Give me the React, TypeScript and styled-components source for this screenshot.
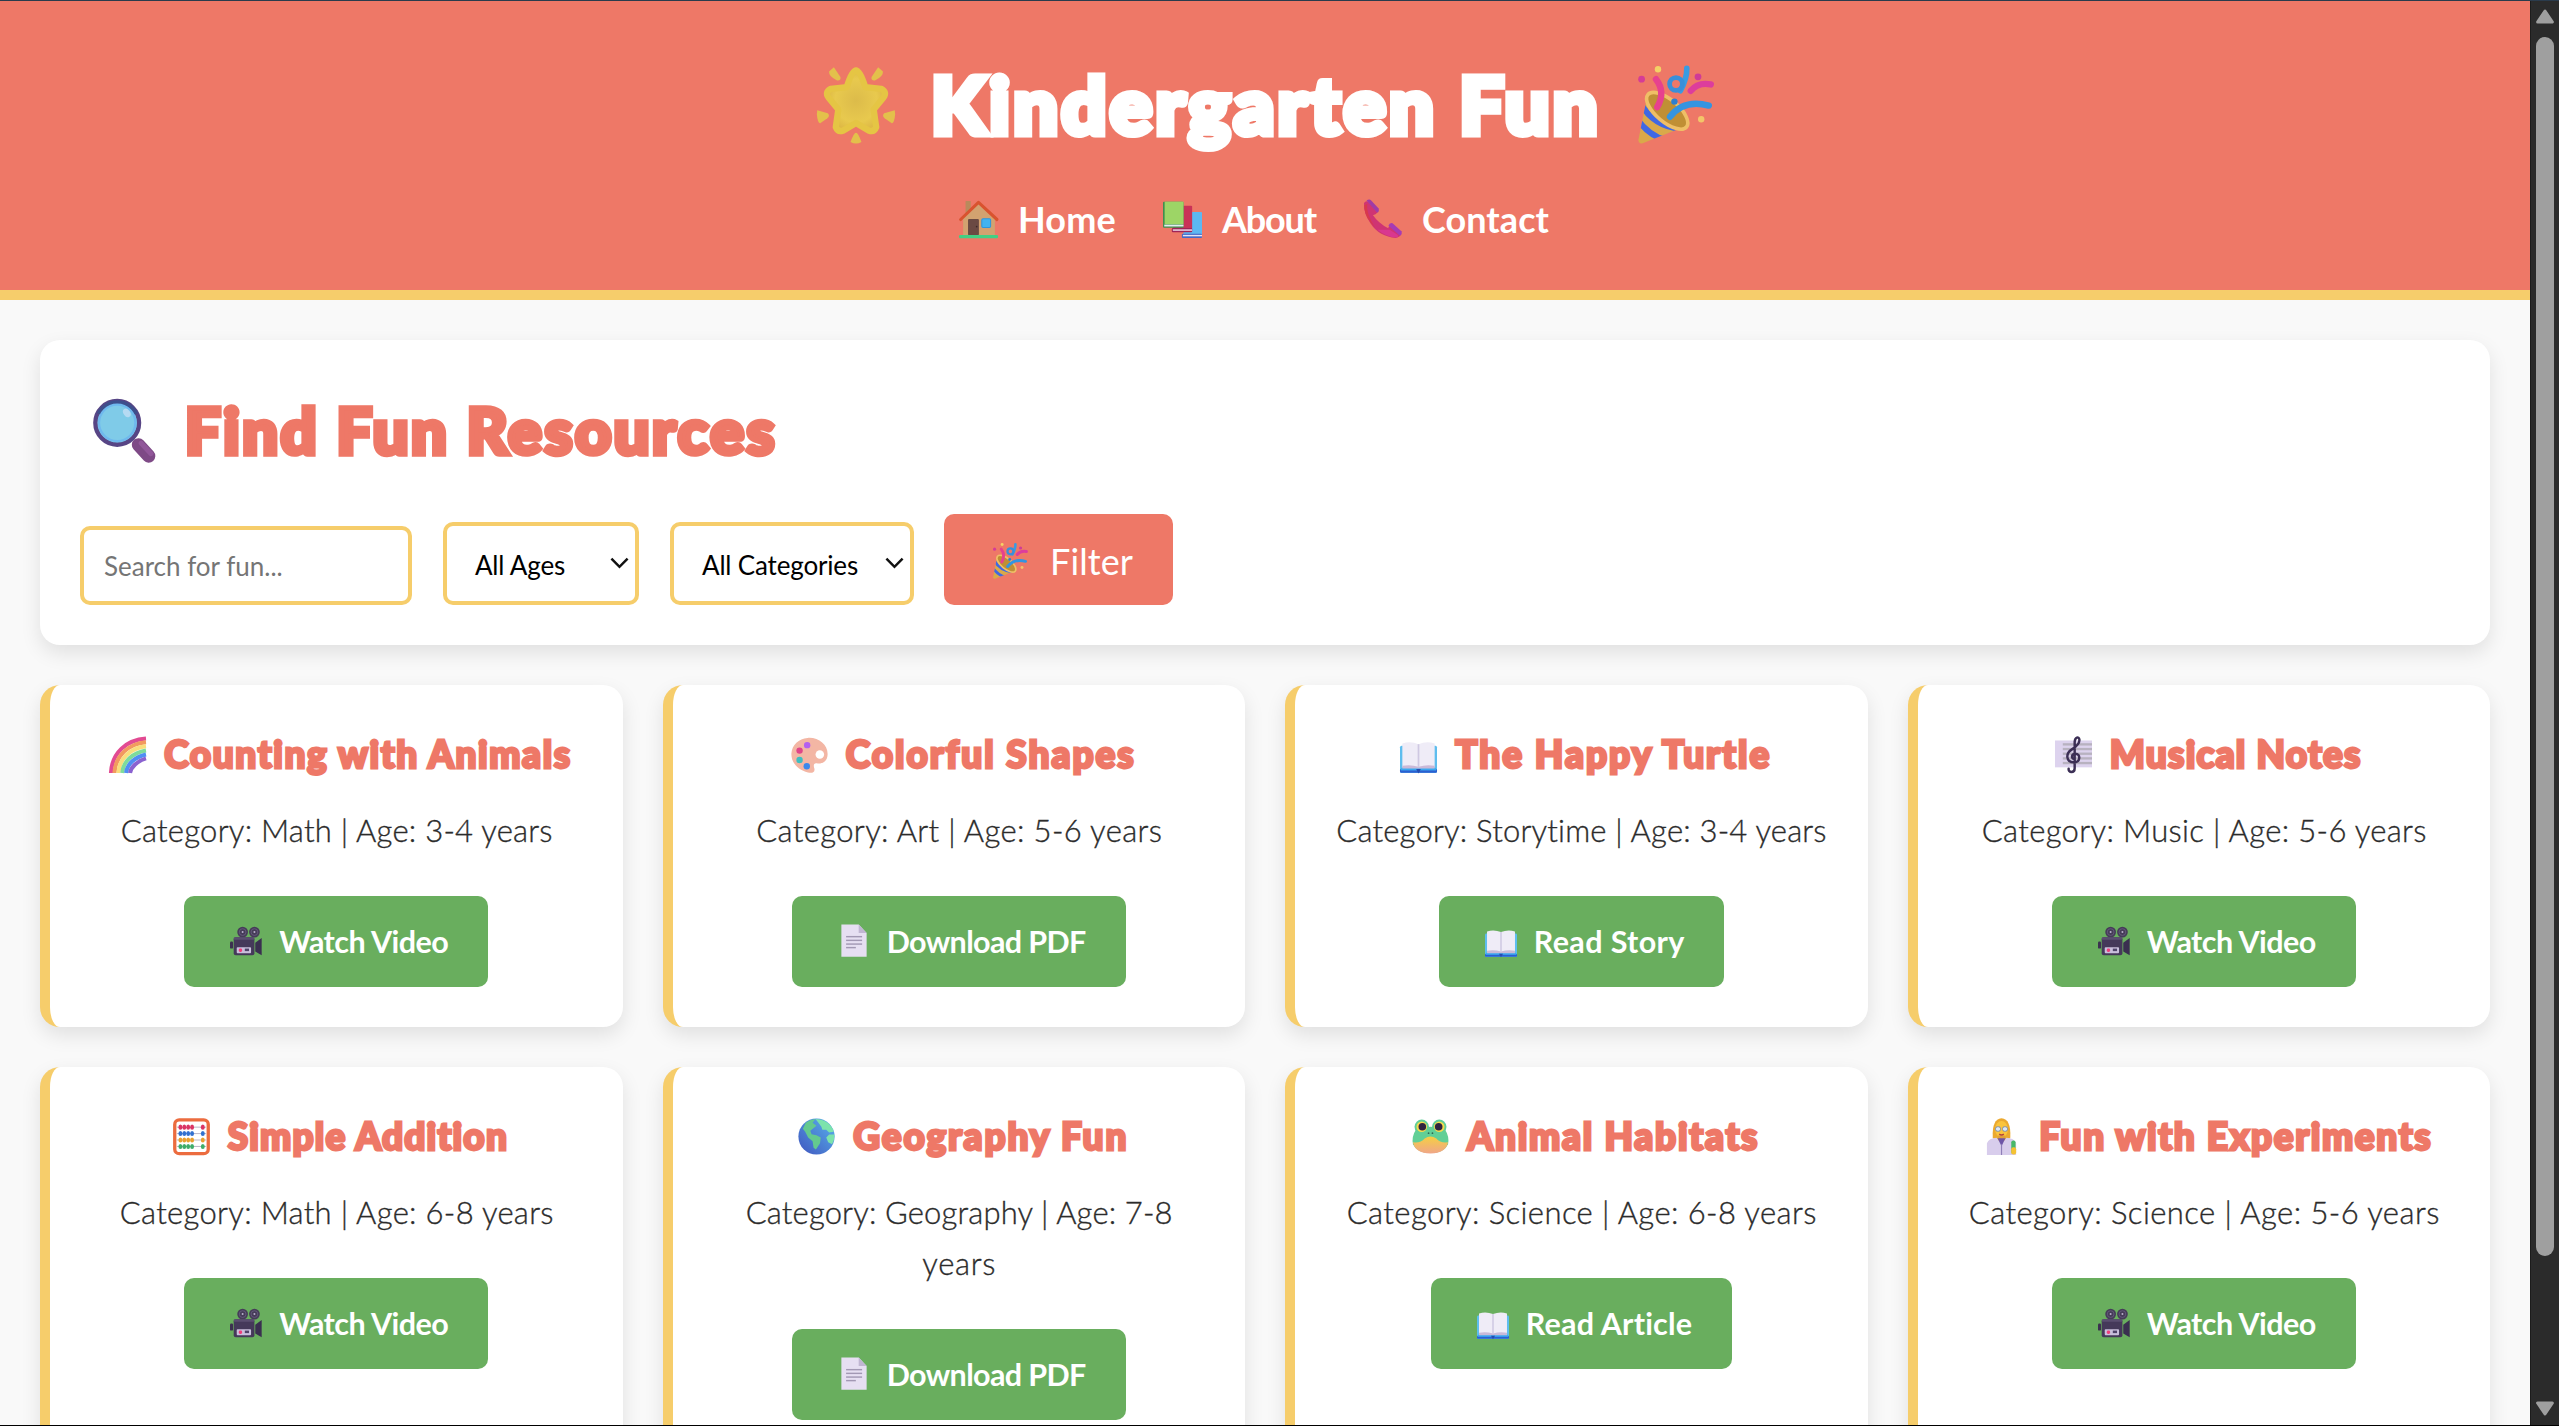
import React, { useLayoutEffect, useRef, useState } from "react";
import styled, { createGlobalStyle } from "styled-components";

const coral = "#ee7867";
const sun = "#f6cd6b";
const leaf = "#69ae5e";

const GlobalStyle = createGlobalStyle`
  *, *::before, *::after { box-sizing: border-box; }
  html, body { margin: 0; height: 100%; overflow: hidden; }
  body {
    background: #f9f9f9;
    color: #333;
    font-family: Lato, "Open Sans", sans-serif;
  }
`;

/* ---------- text set to a measured width ---------- */

const Line = styled.span<{ $w: number }>`
  display: block;
  flex: none;
  width: ${(p) => p.$w}px;
  white-space: nowrap;
`;

function Fit({ w, children }: { w: number; children: string }) {
  const ref = useRef<HTMLSpanElement>(null);
  const [spacing, setSpacing] = useState(0);
  useLayoutEffect(() => {
    const el = ref.current;
    if (el) setSpacing((w - el.getBoundingClientRect().width) / children.length);
  }, []);
  return (
    <Line $w={w}>
      <span ref={ref} style={{ letterSpacing: spacing }}>
        {children}
      </span>
    </Line>
  );
}

/* ---------- emoji drawings ---------- */

const Glyph = styled.svg<{ $s: number; $dy?: number }>`
  display: block;
  flex: none;
  width: ${(p) => p.$s}px;
  height: ${(p) => p.$s}px;
  margin-top: ${(p) => (p.$dy ?? 0) * 2}px;
  overflow: visible;
`;

const art: Record<string, React.ReactNode> = {
  star: (
    <>
      <defs>
        <radialGradient id="starFill" cx=".5" cy=".5" r=".6">
          <stop offset="0" stopColor="#dcbb4a" />
          <stop offset=".6" stopColor="#e8c94e" />
          <stop offset="1" stopColor="#d8ae3f" />
        </radialGradient>
      </defs>
      <path
        d="M19 3 Q21 3 23.4 11 L31 11.8 Q34 13.4 32 16 L27.4 21.6 L28.6 30 Q27.6 32.6 25 31.6 L19 28 L13 31.6 Q10.4 32.6 9.4 30 L10.6 21.6 L6 16 Q4 13.4 7 11.8 L14.6 11 Q17 3 19 3 Z"
        fill="url(#starFill)" stroke="#e5c544" strokeWidth="3" strokeLinejoin="round"
      />
      <g fill="#e3c04b">
        <path d="M8.5 1.6 L11.6 6.2 Q12 8 10 7.8 Q6 6 6.2 3.6Z" />
        <path d="M29.5 1.6 L26.4 6.2 Q26 8 28 7.8 Q32 6 31.8 3.6Z" />
        <path d="M.6 22 L5.6 23.4 Q6.8 24.6 5.4 25.8 L2 28.2 Q.8 28.2 .4 24Z" />
        <path d="M37.4 22 L32.4 23.4 Q31.2 24.6 32.6 25.8 L36 28.2 Q37.2 28.2 37.6 24Z" />
        <path d="M19 32.6 Q20 32.6 21.6 37 Q19 38.6 16.4 37 Q18 32.6 19 32.6Z" />
      </g>
    </>
  ),
  party: (
    <>
      <defs>
        <clipPath id="coneClip">
          <path d="M5.6 14 L1.2 36 Q1.4 38.4 4 37.4 L25 29Z" />
        </clipPath>
      </defs>
      <path d="M5.6 14 L1.2 36 Q1.4 38.4 4 37.4 L25 29Z" fill="#d9a94a" />
      <g clipPath="url(#coneClip)" stroke="#3f68e4" strokeWidth="3" fill="none">
        <path d="M2 17 Q8 29 23 30.6" />
        <path d="M0 25 Q7 34.4 15 36" />
      </g>
      <ellipse cx="15.6" cy="21.4" rx="12.6" ry="5.6" transform="rotate(40 15.6 21.4)" fill="#c08f35" stroke="#efbf66" strokeWidth="1.8" />
      <g fill="none" strokeLinecap="round" strokeWidth="3.2">
        <path d="M10.6 19.6 Q15 12 10 5.6" stroke="#e7418e" />
        <path d="M17 24.4 Q24 15.4 36.4 18.8" stroke="#3494e0" />
        <path d="M27.4 11.4 Q31 7 37.4 8.2" stroke="#dd3d9c" />
        <path d="M25.4 .2 Q25.6 5 22.2 11.4" stroke="#3a9be2" strokeWidth="2.8" />
        <circle cx="20" cy="8" r="3.2" stroke="#3a8fd9" strokeWidth="2.4" />
      </g>
      <circle cx="2.8" cy="5.6" r="1.7" fill="#d53c97" />
      <circle cx="31" cy="4.4" r="1.7" fill="#cf3b97" />
      <circle cx="19.2" cy="16.8" r="1.6" fill="#2e7fcf" />
      <circle cx="11" cy=".6" r="1.6" fill="#f3d266" />
      <circle cx="32.6" cy="25.6" r="1.6" fill="#f3c569" />
    </>
  ),
  house: (
    <>
      <rect x="6.4" y="1" width="5" height="13" fill="#b98a5c" />
      <path d="M4 18 L19 3 L35 18 V36 H4Z" fill="#d2a270" />
      <path d="M1.6 19 L19 2.4 L37 19" fill="none" stroke="#d9532f" strokeWidth="3" strokeLinejoin="round" strokeLinecap="round" />
      <rect x="8.8" y="18.4" width="10.6" height="16" rx="1" fill="#6b4a43" />
      <circle cx="17.2" cy="26" r=".8" fill="#3c2a28" />
      <rect x="22.2" y="18.2" width="8.6" height="8.6" rx="1.2" fill="#42b3f0" stroke="#2f95dc" strokeWidth="1" />
      <rect x="0" y="34.2" width="38" height="3" rx="1" fill="#44cf83" />
    </>
  ),
  books: (
    <>
      <rect x="20" y="11.6" width="18" height="25" rx="1" fill="#5cb8f2" />
      <rect x="18.4" y="32.8" width="19.6" height="4.2" rx="1" fill="#4468c6" />
      <rect x="19.4" y="34" width="18.6" height="1.4" fill="#e5e4f4" />
      <rect x="10" y="5.6" width="18.4" height="25.6" rx="1" fill="#c93257" />
      <rect x="8.6" y="27.4" width="19.8" height="4" rx="1" fill="#a02458" />
      <rect x="9.6" y="28.6" width="18.8" height="1.4" fill="#eed9ea" />
      <rect x="0" y="1.6" width="20" height="25.4" rx="1" fill="#3f8f4e" />
      <rect x="1.6" y="1.6" width="18.4" height="22" fill="#9dd566" />
      <rect x="1.2" y="24" width="18.8" height="1.8" fill="#e4ecef" />
    </>
  ),
  phone: (
    <>
      <path d="M1 3 Q2.4 .6 5 1.6 L14 12 Q12.6 15 9.6 14.6 Q15 22.6 24.6 27.6 Q25 24.6 28.4 24 L37 33 Q36.4 36.4 32 37 Q16 36 7.4 23 Q.4 13 1 3Z" fill="#cf3473" />
      <path d="M1.2 5 Q.6 13 7.4 22 L12 27 Q3 14 4 4Z" fill="#d8394c" />
      <path d="M3.4 .6 Q6 -1.4 8 .4 L15 8 Q16.4 11 13.8 12.4Z" fill="#a03ba6" />
      <path d="M24.8 25 Q26 21.6 28.8 22.6 L37.4 30.4 Q38.6 33.4 36 34.8Z" fill="#a53bb4" />
      <path d="M14 29 Q24 37 34 36.4 L34 34 L26 29Z" fill="#e03aa1" opacity=".6" />
    </>
  ),
  magnifier: (
    <>
      <path d="M27.4 27.6 L33.6 34.4" stroke="#7e4a86" strokeWidth="8" strokeLinecap="round" />
      <path d="M29 26.6 L35 33" stroke="#91579a" strokeWidth="3" strokeLinecap="round" />
      <circle cx="14.6" cy="14.4" r="13.2" fill="#7fcbe8" stroke="#574585" strokeWidth="2.6" />
      <path d="M3.4 9 A12.6 12.6 0 0 1 26 9" fill="none" stroke="#3d4f8c" strokeWidth="2.4" />
      <circle cx="14.6" cy="14.4" r="11" fill="none" stroke="#6fb9ee" strokeWidth="1.4" />
      <ellipse cx="20.4" cy="8.4" rx="2" ry="2.8" transform="rotate(-35 20.4 8.4)" fill="#b5daf2" />
    </>
  ),
  rainbow: (
    <g fill="none" strokeWidth="4.2">
      <path d="M2 38 C3 17 18 4 38 2.6" stroke="#e24a92" />
      <path d="M5.6 38 C6.6 20 20 8 38 6.4" stroke="#f29a5f" />
      <path d="M9.6 38 C10.4 23.4 21.6 12.4 38 10.6" stroke="#f9de7d" />
      <path d="M13.6 38 C14.4 26 24.4 17 38 14.8" stroke="#7edc9b" />
      <path d="M17.6 38 C18.4 29 26.6 21.4 38 19" stroke="#4f8ff2" />
      <path d="M21.6 38 C22.4 32 29 25.6 38 23" stroke="#8a62d0" />
    </g>
  ),
  palette: (
    <>
      <path d="M17 2 C28 1 38 9 37.6 19 C37.4 26 32 29.2 26.4 28 C23 27.6 23 30.4 24 33.4 C25 38 21 38.4 17.4 37.4 C7 35 0 27 .4 18 C1 9 8 2.6 17 2Z" fill="#f3b6a4" />
      <circle cx="29.6" cy="19" r="4.4" fill="#fff" />
      <circle cx="16.6" cy="9.4" r="3.3" fill="#b45ff0" />
      <circle cx="8.8" cy="15" r="3.3" fill="#e0458a" />
      <circle cx="8.8" cy="24.6" r="3.3" fill="#3ebec0" />
      <circle cx="16.2" cy="31" r="3.3" fill="#3b88ec" />
    </>
  ),
  book: (
    <>
      <rect x="0" y="10" width="38" height="28" rx="1.6" fill="#5ebdee" />
      <rect x="0" y="34" width="38" height="3.8" rx="1.4" fill="#2c5fd0" />
      <rect x="1" y="33" width="36" height="2.4" fill="#3aa8f0" />
      <path d="M2.4 7.6 Q11 5 19 8.4 Q27 5 35.6 7.6 V32 H2.4Z" fill="#efecf7" />
      <path d="M2.4 30.6 Q11 29 19 31.6 Q27 29 35.6 30.6 V33.4 H2.4Z" fill="#c9b9d8" />
      <path d="M19 8.4 V32" stroke="#cfc8e2" strokeWidth="1.8" />
      <path d="M16.6 34 H21.4 L19 38.4Z" fill="#254cb0" />
    </>
  ),
  music: (
    <>
      <rect x="0" y="4.6" width="38" height="27.6" fill="#ddd3ee" />
      <g fill="#b8b2c0">
        {[7.4, 12.2, 17, 21.8, 26.6].map((y) => (
          <rect key={y} x="8" y={y} width="30" height="2.4" />
        ))}
      </g>
      <path d="M19 27 C11.4 27 10.6 18 17 14 C22.6 10.4 25.6 7 25 3.4 C24.4 .4 20.6 1 20.2 6 L20.2 33 C20.2 38.6 13.4 38 14 33.6 M19 27 C26.6 27 26.4 18.2 21 18.2 C16.6 18.2 16.6 23.4 19.6 23.6" fill="none" stroke="#3c2f55" strokeWidth="2.5" strokeLinecap="round" />
    </>
  ),
  abacus: (
    <>
      <rect x="1.8" y="2" width="34.4" height="34.6" rx="4.6" fill="#fff" stroke="#ec6c3f" strokeWidth="3.4" />
      {["#db3464", "#3271cf", "#eaa02f", "#3fad69"].map((c, i) => (
        <g key={c}>
          <path d={`M4 ${9.4 + i * 6.6} H34`} stroke="#b9b4c4" strokeWidth="1" />
          {[7, 11, 15, 19, 30].map((x) => (
            <ellipse key={x} cx={x + 0.6} cy={9.4 + i * 6.6} rx="2" ry="2.6" fill={c} />
          ))}
        </g>
      ))}
    </>
  ),
  globe: (
    <>
      <defs>
        <linearGradient id="sea" x1="1" y1="0" x2="0" y2="1">
          <stop offset="0" stopColor="#58b3ec" />
          <stop offset="1" stopColor="#4055bf" />
        </linearGradient>
      </defs>
      <circle cx="19" cy="19" r="18.6" fill="url(#sea)" />
      <path d="M8 5 Q12 1.6 18 1 L15 5 L19 8 L12.6 13 L14 16.6 L19 17.6 L23.4 20 L22.6 26 L18.4 32.4 L16 30.6 L15 24 L10.4 20 L7.4 14 L5 11Z" fill="#64c98f" />
      <path d="M18 1 Q28 1 33.6 8 Q36 11 36.6 14 L32 15 L29 12 L25 12 L24 9 L21 5Z M37.4 17 Q37.6 23 35 27 L31 25 L29 20 L32 17Z" fill="#7ce3ac" />
    </>
  ),
  frog: (
    <>
      <defs>
        <linearGradient id="frogChin" x1="0" y1="0" x2="0" y2="1">
          <stop offset="0" stopColor="#f5cf42" />
          <stop offset="1" stopColor="#f0a688" />
        </linearGradient>
      </defs>
      <circle cx="10" cy="9" r="7.4" fill="#5fcf99" />
      <circle cx="28" cy="9" r="7.4" fill="#5fcf99" />
      <path d="M4 12 Q19 6 34 12 Q38.6 19 37 27 Q33 36 19 36 Q5 36 1 27 Q-.6 19 4 12Z" fill="#62cf96" />
      <path d="M1 25 Q9 26 13 21 Q19 17 25 21 Q29 26 37 25 Q35 36.4 19 36.4 Q3 36.4 1 25Z" fill="url(#frogChin)" />
      <circle cx="10" cy="9" r="5.4" fill="#f5dc4e" />
      <circle cx="28" cy="9" r="5.4" fill="#f5dc4e" />
      <circle cx="10.6" cy="9" r="3.9" fill="#2f2440" />
      <circle cx="27.4" cy="9" r="3.9" fill="#2f2440" />
      <circle cx="17" cy="15.6" r=".9" fill="#2e6a52" />
      <circle cx="21" cy="15.6" r=".9" fill="#2e6a52" />
    </>
  ),
  scientist: (
    <>
      <path d="M9 20 Q8 1 18 .2 Q28 1 27 20 L24 24 H12Z" fill="#eba92f" />
      <ellipse cx="18" cy="11.6" rx="6.6" ry="8.4" fill="#fac43d" />
      <path d="M14.6 18 H21.6 V24 H14.6Z" fill="#e0a03a" />
      <path d="M3 38 V26 Q5 20.6 13 20.4 L18 27 L23 20.4 Q31 20.6 33 26 V38Z" fill="#d8cdec" />
      <path d="M14 20.8 L18 29 L22 20.8Z" fill="#6e55a8" />
      <path d="M18 27 V38" stroke="#8f80b8" strokeWidth="1.2" />
      <g fill="#dbe7f7" stroke="#7d8ba5" strokeWidth="1">
        <rect x="11.8" y="9" width="5.2" height="4.6" rx="2" />
        <rect x="19" y="9" width="5.2" height="4.6" rx="2" />
      </g>
      <path d="M15.6 16.6 Q18 18.4 20.4 16.6" stroke="#b5413d" strokeWidth="1.4" fill="none" />
      <rect x="28" y="23" width="4.4" height="14" rx="2" fill="#48b968" />
      <rect x="28" y="30" width="5" height="7.4" rx="2" fill="#f5c233" />
    </>
  ),
  camera: (
    <>
      <circle cx="15" cy="8.4" r="6.4" fill="#463c58" />
      <circle cx="29" cy="8.4" r="6.4" fill="#463c58" />
      <circle cx="15" cy="8.4" r="4" fill="none" stroke="#675c80" strokeWidth="1" />
      <circle cx="29" cy="8.4" r="4" fill="none" stroke="#675c80" strokeWidth="1" />
      <circle cx="15" cy="8.4" r="1.2" fill="#b9b0cc" />
      <circle cx="29" cy="8.4" r="1.2" fill="#b9b0cc" />
      <rect x="4.4" y="14.4" width="24.6" height="21.6" rx="2.4" fill="#45395a" />
      <rect x="4.4" y="14.4" width="24.6" height="3" rx="1.4" fill="#5a4e70" />
      <rect x="0" y="19.6" width="3.6" height="8.4" rx="1.4" fill="#3c3150" />
      <path d="M30 21 L37.6 15.4 V36 L30 31.4Z" fill="#3a2f50" />
      <rect x="8" y="26.4" width="17" height="7" rx="1" fill="#c9bfdc" />
      <rect x="10.4" y="28" width="4" height="4" rx="1.6" fill="#ee3f7b" />
      <rect x="17.6" y="28" width="5" height="3" fill="#50446b" />
    </>
  ),
  page: (
    <>
      <path d="M4 -.6 H24.6 L34 9.4 V37.6 H4Z" fill="#e6dff2" />
      <path d="M24.6 -.6 L34 9.4 H24.6Z" fill="#c0b6d2" />
      <g fill="#a298b4">
        <rect x="9.6" y="13" width="19" height="1.7" />
        <rect x="9.6" y="17.4" width="19" height="1.7" />
        <rect x="9.6" y="21.8" width="19" height="1.7" />
        <rect x="9.6" y="26" width="11.6" height="1.7" />
      </g>
    </>
  ),
};

function Emoji({ name, size, dy }: { name: string; size: number; dy?: number }) {
  return (
    <Glyph $s={size} $dy={dy} viewBox="0 0 38 38" aria-hidden>
      {art[name]}
    </Glyph>
  );
}

/* ---------- frame ---------- */

const Frame = styled.div`
  display: grid;
  grid-template-columns: 1fr 29px;
  height: 1426px;
  border-top: 1px solid #2a3b4c;
  border-bottom: 1px solid #000;
  overflow: hidden;
`;

const Page = styled.div`
  min-width: 0;
  overflow: hidden;
`;

const ScrollTrack = styled.div`
  display: flex;
  flex-direction: column;
  align-items: center;
  background: #2b2b2b;
  border-left: 1px solid #1c1c1c;
  padding: 8px 0 9px;
`;

const Thumb = styled.div`
  width: 18px;
  height: 1219px;
  margin-top: 13px;
  margin-bottom: auto;
  border-radius: 9px;
  background: #9f9f9f;
`;

const ArrowIcon = styled.svg<{ $down?: boolean }>`
  display: block;
  width: 18px;
  height: 15px;
  transform: ${(p) => (p.$down ? "rotate(180deg)" : "none")};
`;

const Arrow = ({ down }: { down?: boolean }) => (
  <ArrowIcon $down={down} viewBox="0 0 18 15">
    <path d="M9 2 L16.4 13 H1.6Z" fill="#9f9f9f" stroke="#9f9f9f" strokeWidth="3" strokeLinejoin="round" />
  </ArrowIcon>
);

/* ---------- header ---------- */

const Header = styled.header`
  height: 299px;
  padding-top: 53px;
  background: ${coral};
  border-bottom: 10px solid ${sun};
  color: #fff;
`;

const SiteTitle = styled.h1`
  display: flex;
  align-items: center;
  justify-content: center;
  gap: 35px;
  height: 100px;
  margin: 0 2px 0 0;
  font-size: 79px;
  line-height: 98px;
  font-weight: 900;
  stroke-linejoin: round;
  -webkit-text-stroke: 7px #fff;
`;

const Nav = styled.nav`
  display: flex;
  justify-content: center;
  gap: 47px;
  margin-top: 44px;
  padding-right: 22px;
`;

const NavLink = styled.a`
  display: flex;
  align-items: center;
  gap: 20px;
  height: 42px;
  color: #fff;
  font-size: 36px;
  line-height: 42px;
  font-weight: 700;
  text-decoration: none;
`;

/* ---------- search panel ---------- */

const Main = styled.main`
  padding: 40px;
`;

const Panel = styled.section`
  height: 305px;
  padding: 40px;
  border-radius: 20px;
  background: #fff;
  box-shadow: 0 8px 20px rgba(0, 0, 0, 0.1);
`;

const PanelTitle = styled.h2`
  display: flex;
  align-items: center;
  gap: 29px;
  height: 99px;
  margin: 0;
  padding-left: 13px;
  color: ${coral};
  font-size: 63px;
  line-height: 97px;
  font-weight: 900;
  stroke-linejoin: round;
  -webkit-text-stroke: 5.5px ${coral};
`;

const Controls = styled.form`
  display: flex;
  align-items: flex-end;
  gap: 31px;
  height: 126px;
`;

const SearchInput = styled.input`
  width: 332px;
  height: 79px;
  padding: 0 20px;
  border: 4px solid ${sun};
  border-radius: 10px;
  background: #fff;
  font: 400 26px Lato, sans-serif;
  letter-spacing: 0;
  outline: none;
  &::placeholder {
    color: #757575;
    opacity: 1;
  }
`;

const SelectBox = styled.div<{ $w: number }>`
  display: flex;
  align-items: center;
  justify-content: space-between;
  width: ${(p) => p.$w}px;
  height: 83px;
  margin-bottom: 0;
  padding: 3px 6px 0 28px;
  border: 4px solid ${sun};
  border-radius: 10px;
  background: #fff;
  color: #000;
  font-size: 26px;
  line-height: 40px;
`;

const Chevron = styled.svg`
  display: block;
  width: 19px;
  height: 12px;
  margin-bottom: 4px;
`;

const FilterButton = styled.button`
  display: flex;
  align-items: center;
  gap: 23px;
  width: 229px;
  height: 91px;
  margin-left: -1px;
  padding: 2px 0 0 48px;
  border: 0;
  border-radius: 10px;
  background: ${coral};
  color: #fff;
  font: 400 36px/60px Lato, sans-serif;
  text-align: left;
`;

function Select({ w, textWidth, label }: { w: number; textWidth: number; label: string }) {
  return (
    <SelectBox $w={w}>
      <Fit w={textWidth}>{label}</Fit>
      <Chevron viewBox="0 0 19 12">
        <path d="M1.4 1.6 L9.5 9.8 L17.6 1.6" fill="none" stroke="#111" strokeWidth="2.5" />
      </Chevron>
    </SelectBox>
  );
}

/* ---------- cards ---------- */

const Grid = styled.div`
  display: grid;
  grid-template-columns: repeat(4, 1fr);
  gap: 40px;
  margin-top: 40px;
`;

const CardBox = styled.article`
  display: flex;
  flex-direction: column;
  align-items: center;
  min-height: 342px;
  padding: 40px 40px 40px 30px;
  border-left: 10px solid ${sun};
  border-radius: 20px;
  background: #fff;
  box-shadow: 0 8px 20px rgba(0, 0, 0, 0.1);
`;

const CardTitle = styled.h3`
  display: flex;
  align-items: center;
  gap: 18px;
  height: 57px;
  margin: 0 0 0 19px;
  color: ${coral};
  font-size: 37px;
  line-height: 57px;
  font-weight: 900;
  stroke-linejoin: round;
  -webkit-text-stroke: 2.8px ${coral};
`;

const Meta = styled.div`
  display: flex;
  flex-direction: column;
  align-items: center;
  margin: 23px 0 40px 11px;
  color: #2b2b2b;
  font-size: 31px;
  line-height: 51px;
  font-weight: 300;
  -webkit-text-stroke: 0.35px #2b2b2b;
`;

const CardButton = styled.a<{ $w: number }>`
  display: flex;
  align-items: center;
  gap: 17px;
  width: ${(p) => p.$w}px;
  height: 91px;
  margin-left: 10px;
  padding: 0 0 2px 46px;
  border-radius: 10px;
  background: ${leaf};
  color: #fff;
  font-size: 30.5px;
  line-height: 60px;
  font-weight: 700;
  text-decoration: none;
`;

type Action = { label: string; icon: string; w: number; text: number };

const watch: Action = { label: "Watch Video", icon: "camera", w: 304, text: 169 };
const download: Action = { label: "Download PDF", icon: "page", w: 334, text: 199 };
const story: Action = { label: "Read Story", icon: "book", w: 285, text: 151 };
const article: Action = { label: "Read Article", icon: "book", w: 301, text: 167 };

type Card = { icon: string; title: string; tw: number; meta: [string, number][]; action: Action };

const cards: Card[] = [
  { icon: "rainbow", title: "Counting with Animals", tw: 408, meta: [["Category: Math | Age: 3-4 years", 432]], action: watch },
  { icon: "palette", title: "Colorful Shapes", tw: 290, meta: [["Category: Art | Age: 5-6 years", 406]], action: download },
  { icon: "book", title: "The Happy Turtle", tw: 316, meta: [["Category: Storytime | Age: 3-4 years", 491]], action: story },
  { icon: "music", title: "Musical Notes", tw: 252, meta: [["Category: Music | Age: 5-6 years", 445]], action: watch },
  { icon: "abacus", title: "Simple Addition", tw: 281, meta: [["Category: Math | Age: 6-8 years", 434]], action: watch },
  { icon: "globe", title: "Geography Fun", tw: 275, meta: [["Category: Geography | Age: 7-8", 427], ["years", 74]], action: download },
  { icon: "frog", title: "Animal Habitats", tw: 292, meta: [["Category: Science | Age: 6-8 years", 470]], action: article },
  { icon: "scientist", title: "Fun with Experiments", tw: 393, meta: [["Category: Science | Age: 5-6 years", 471]], action: watch },
];

export default function App() {
  return (
    <>
      <GlobalStyle />
      <Frame>
        <Page>
          <Header>
            <SiteTitle>
              <Emoji name="star" size={80} />
              <Fit w={670}>Kindergarten Fun</Fit>
              <Emoji name="party" size={76} dy={2} />
            </SiteTitle>
            <Nav>
              <NavLink>
                <Emoji name="house" size={39} />
                <Fit w={98}>Home</Fit>
              </NavLink>
              <NavLink>
                <Emoji name="books" size={39} />
                <Fit w={94}>About</Fit>
              </NavLink>
              <NavLink>
                <Emoji name="phone" size={39} />
                <Fit w={127}>Contact</Fit>
              </NavLink>
            </Nav>
          </Header>
          <Main>
            <Panel>
              <PanelTitle>
                <Emoji name="magnifier" size={63} dy={1} />
                <Fit w={592}>Find Fun Resources</Fit>
              </PanelTitle>
              <Controls>
                <SearchInput placeholder="Search for fun..." />
                <Select w={196} textWidth={90} label="All Ages" />
                <Select w={244} textWidth={156} label="All Categories" />
                <FilterButton type="button">
                  <Emoji name="party" size={35} dy={1} />
                  <Fit w={83}>Filter</Fit>
                </FilterButton>
              </Controls>
            </Panel>
            <Grid>
              {cards.map((c) => (
                <CardBox key={c.title}>
                  <CardTitle>
                    <Emoji name={c.icon} size={37} dy={1} />
                    <Fit w={c.tw}>{c.title}</Fit>
                  </CardTitle>
                  <Meta>
                    {c.meta.map(([text, w]) => (
                      <Fit key={text} w={w}>{text}</Fit>
                    ))}
                  </Meta>
                  <CardButton $w={c.action.w}>
                    <Emoji name={c.action.icon} size={32} />
                    <Fit w={c.action.text}>{c.action.label}</Fit>
                  </CardButton>
                </CardBox>
              ))}
            </Grid>
          </Main>
        </Page>
        <ScrollTrack>
          <Arrow />
          <Thumb />
          <Arrow down />
        </ScrollTrack>
      </Frame>
    </>
  );
}
